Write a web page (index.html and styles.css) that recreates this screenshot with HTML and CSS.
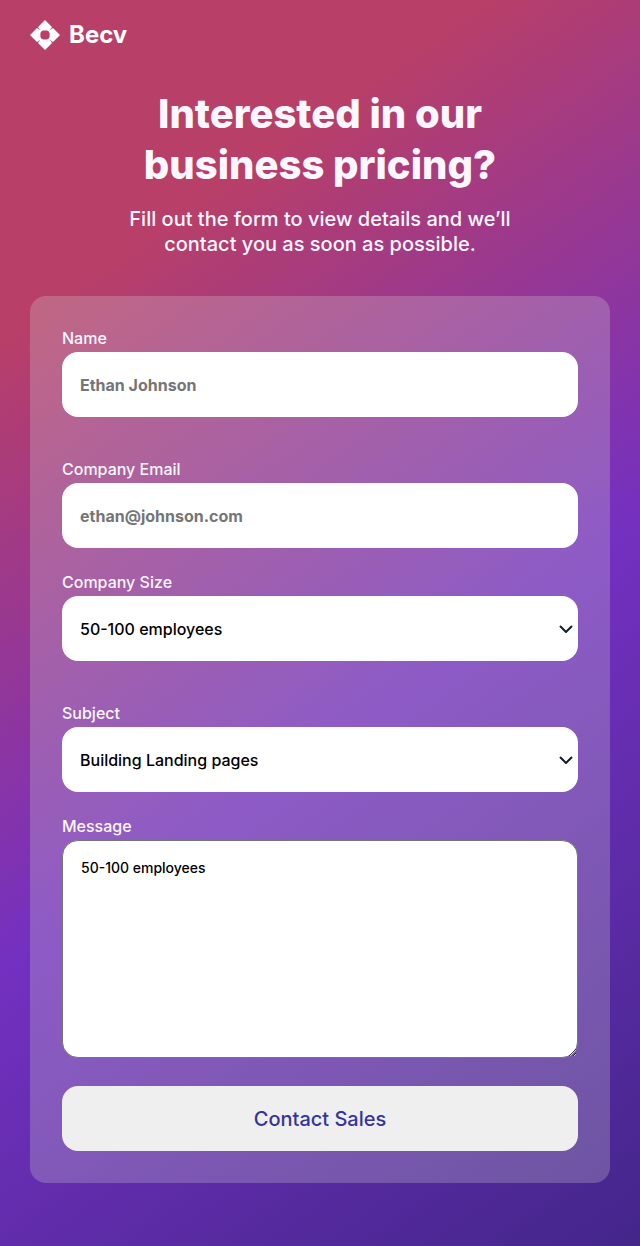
FILE: index.html
```html
<!DOCTYPE html>
<html lang="en">
<head>
<meta charset="utf-8">
<meta name="viewport" content="width=device-width, initial-scale=1">
<title>Becv - Business pricing</title>
<link rel="stylesheet" href="styles.css">
</head>
<body>
<div class="page">
  <header class="header">
    <a class="brand" href="#">
      <svg class="brand-mark" viewBox="0 0 30 30" aria-hidden="true">
        <g fill="currentColor">
          <path d="M15 0 22 7 19 11.500 17 10.400H13L11 11.500 8 7Z"/>
          <path d="M30 15 23 22 18.500 19 19.600 17V13L18.500 11 23 8Z"/>
          <path d="M15 30 8 23 11 18.500 13 19.600H17L19 18.500 22 23Z"/>
          <path d="M0 15 7 8 11.500 11 10.400 13V17L11.500 19 7 22Z"/>
        </g>
      </svg>
      <span>Becv</span>
    </a>
  </header>
  <main>
    <section class="intro">
      <h1 class="title">Interested in our<br>business pricing?</h1>
      <p class="lead">Fill out the form to view details and we’ll<br>contact you as soon as possible.</p>
    </section>
    <form class="card">
      <div class="group">
        <div class="field">
          <label for="name">Name</label>
          <input class="control" id="name" type="text" placeholder="Ethan Johnson">
        </div>
        <div class="field">
          <label for="email">Company Email</label>
          <input class="control" id="email" type="email" placeholder="ethan@johnson.com">
        </div>
      </div>
      <div class="group">
        <div class="field">
          <label for="size">Company Size</label>
          <div class="select-wrap">
            <select class="control" id="size"><option>50-100 employees</option></select>
            <svg class="chevron" viewBox="0 0 14 8" aria-hidden="true"><path d="M1 1 7 7 13 1"/></svg>
          </div>
        </div>
        <div class="field">
          <label for="subject">Subject</label>
          <div class="select-wrap">
            <select class="control" id="subject"><option>Building Landing pages</option></select>
            <svg class="chevron" viewBox="0 0 14 8" aria-hidden="true"><path d="M1 1 7 7 13 1"/></svg>
          </div>
        </div>
      </div>
      <div class="field">
        <label for="message">Message</label>
        <textarea class="message" id="message">50-100 employees</textarea>
      </div>
      <button class="submit" type="submit">Contact Sales</button>
    </form>
  </main>
</div>
</body>
</html>
```
FILE: styles.css
```css
* {
  box-sizing: border-box;
}

body {
  margin: 0;
  font-family: Inter, "Liberation Sans", sans-serif;
  font-weight: 500;
  color: #fbf7ff;
}

.page {
  min-height: 100vh;
  padding: 20px 30px 63px;
  background: linear-gradient(145deg, #b83f68 20%, #7430c0 57%, #43268a 100%);
}

.header {
  display: flex;
}

.brand {
  display: flex;
  align-items: center;
  gap: 9px;
  color: #fff;
  font-size: 24px;
  font-weight: 700;
  line-height: 30px;
  text-decoration: none;
}

.brand-mark {
  width: 30px;
  height: 30px;
}

.intro {
  padding: 38px 0 39px;
  text-align: center;
}

.title {
  margin: 0 0 17px;
  font-size: 40px;
  font-weight: 800;
  line-height: 51px;
}

.lead {
  margin: 0;
  font-size: 20px;
  line-height: 25px;
}

.card {
  display: flex;
  flex-direction: column;
  gap: 24px;
  padding: 32px;
  border-radius: 16px;
  background: rgba(217, 217, 217, 0.26);
}

.group {
  display: flex;
  flex-direction: column;
  gap: 42px;
}

.field {
  display: flex;
  flex-direction: column;
  gap: 4px;
  font-size: 16px;
  line-height: 20px;
}

.control {
  width: 100%;
  height: 65px;
  padding: 0 18px;
  border: 0;
  border-radius: 16px;
  background: #fff;
  color: #000;
  font: inherit;
  appearance: none;
}

.control::placeholder {
  color: #757575;
  font-weight: 700;
  opacity: 1;
}

.select-wrap {
  position: relative;
}

.chevron {
  position: absolute;
  top: 29px;
  right: 5px;
  width: 14px;
  height: 8px;
  fill: none;
  stroke: #111c2b;
  stroke-width: 2;
  pointer-events: none;
}

.message {
  display: block;
  width: 100%;
  height: 218px;
  padding: 18px;
  border: 1px solid #767676;
  border-radius: 16px;
  background: #fff;
  color: #000;
  font-family: inherit;
  font-size: 14px;
  font-weight: 500;
  line-height: 18px;
  resize: vertical;
}

.submit {
  height: 65px;
  margin-top: 4px;
  border: 0;
  border-radius: 16px;
  background: #efefef;
  color: #37349b;
  font-family: inherit;
  font-size: 20px;
  font-weight: 500;
}
```
